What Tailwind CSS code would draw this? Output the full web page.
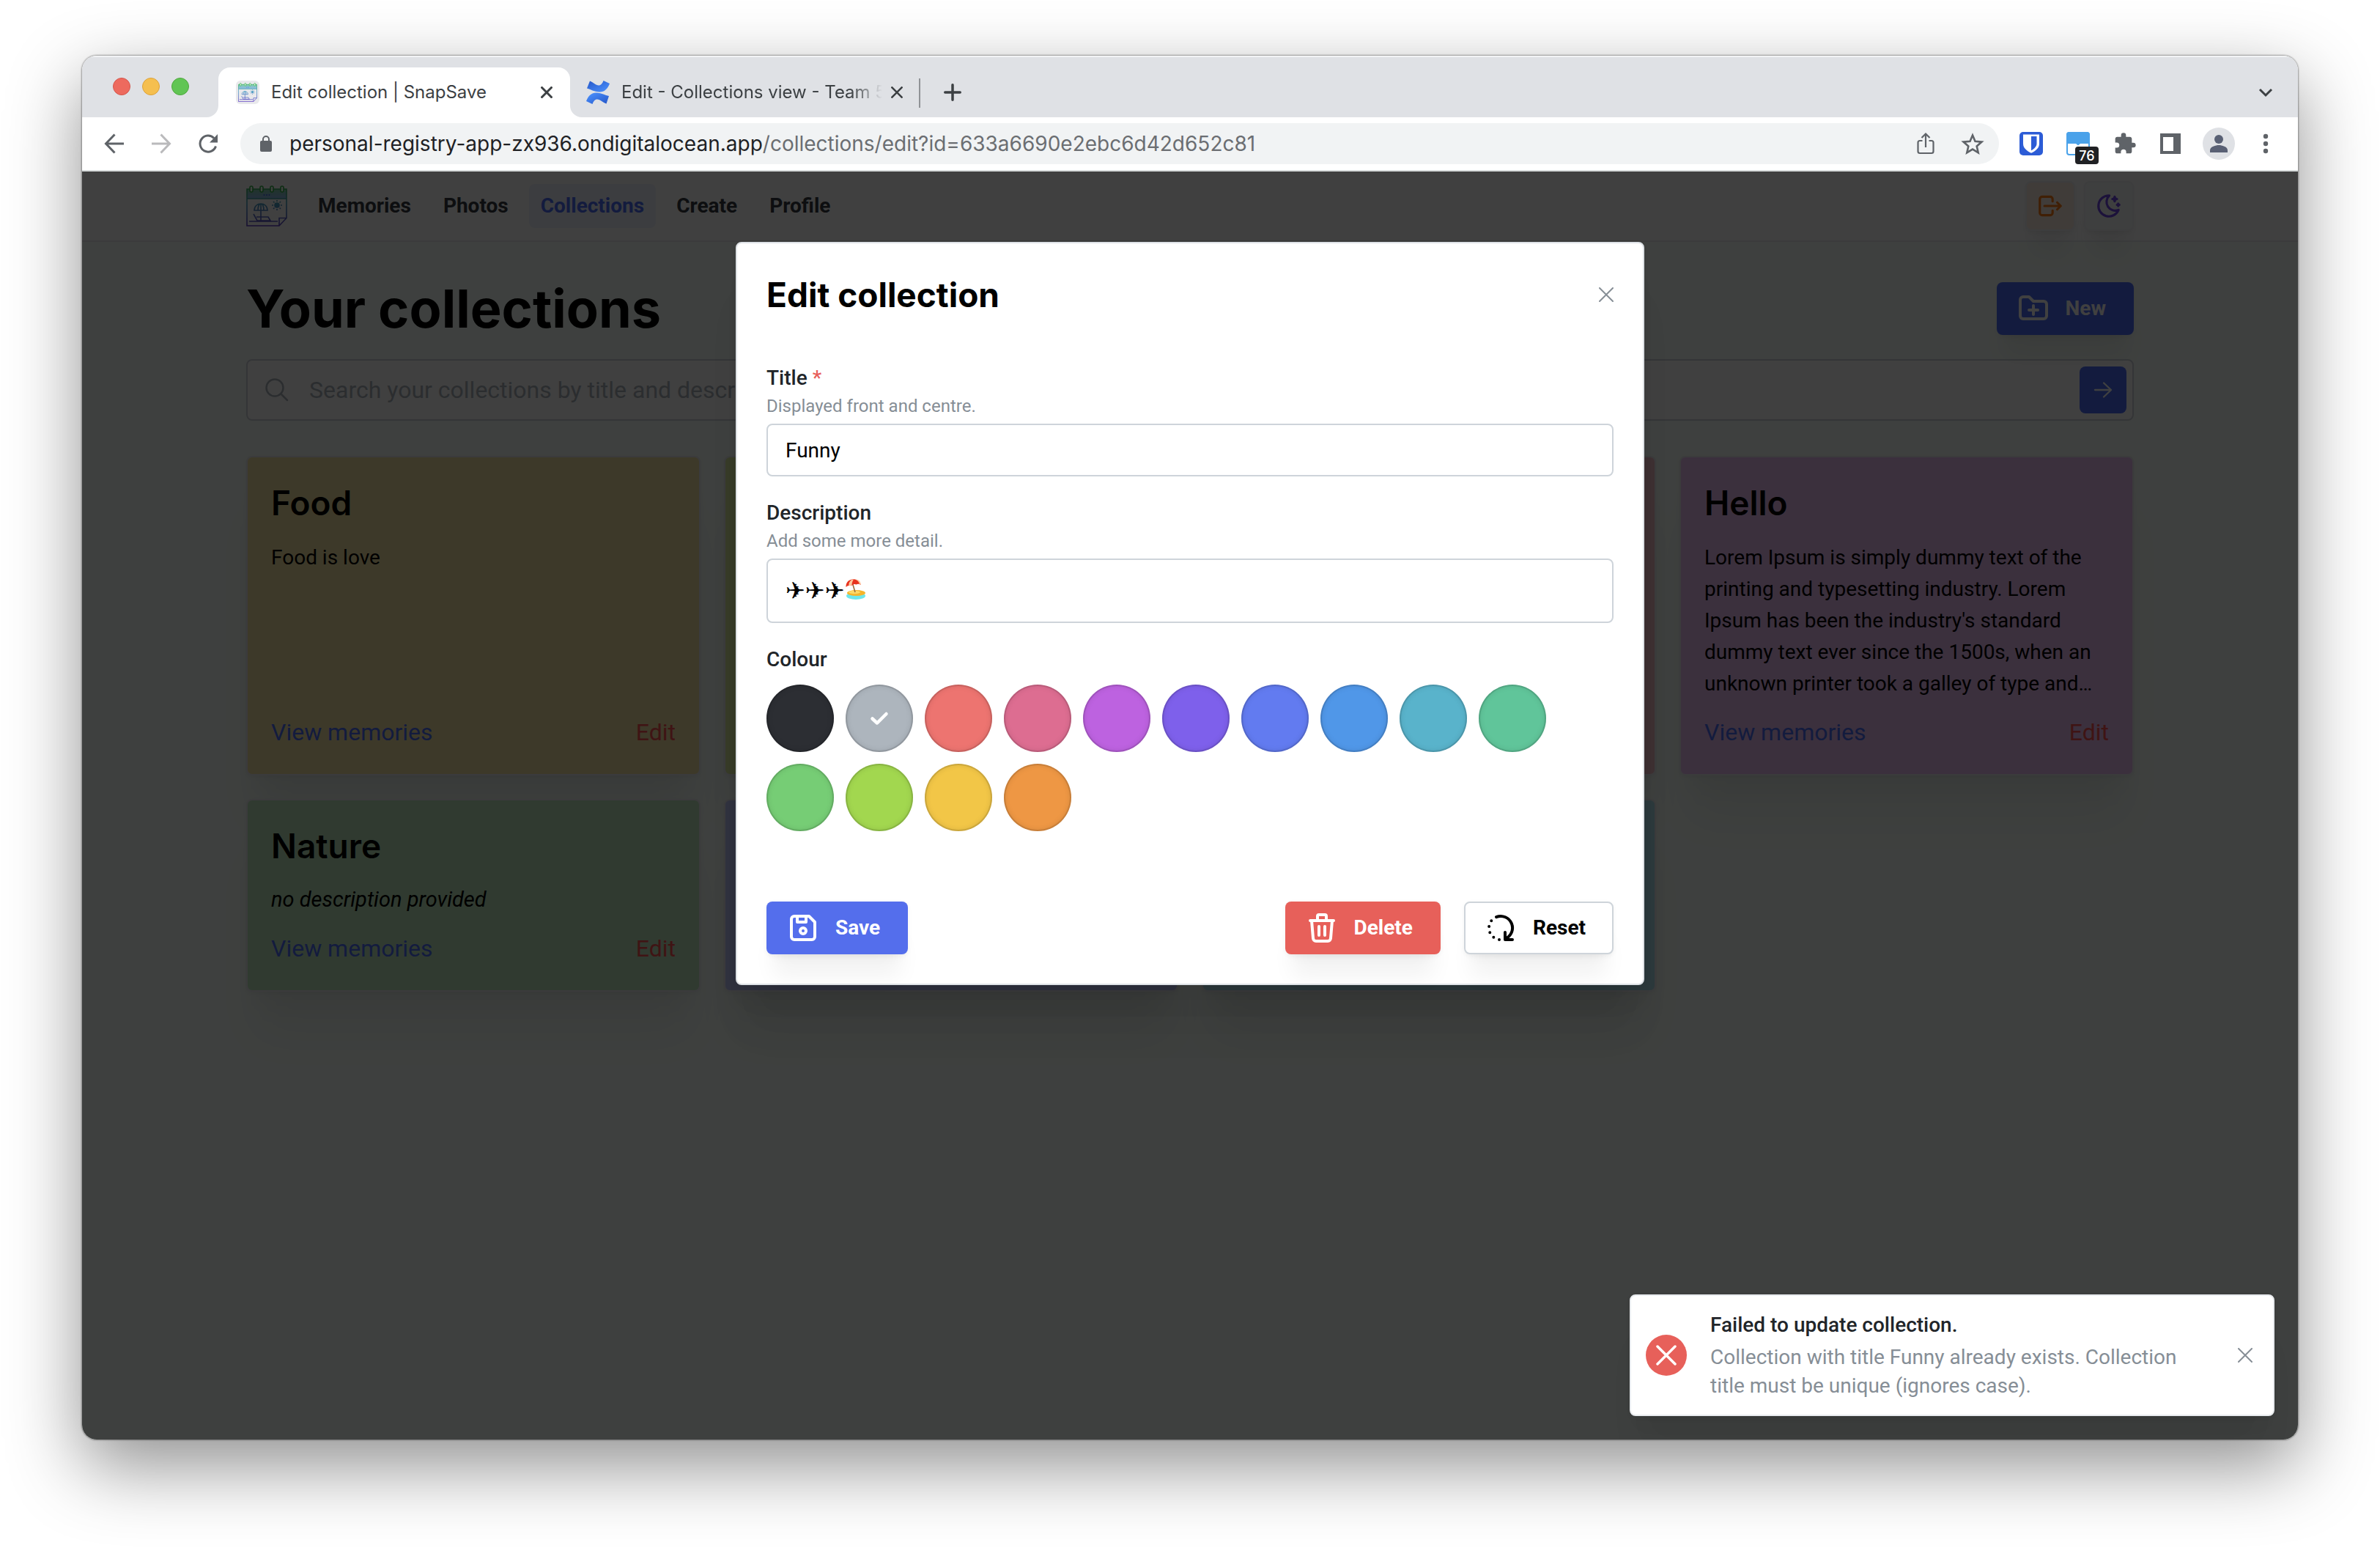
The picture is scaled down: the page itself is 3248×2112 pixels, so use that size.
<!DOCTYPE html>
<html lang="en">
<head>
<meta charset="utf-8">
<title>Edit collection | SnapSave</title>
<script src="https://cdn.jsdelivr.net/npm/@tailwindcss/browser@4"></script>
</head>
<body class="flex min-h-screen bg-white px-28 pt-[76px] pb-[148px] font-['Roboto',sans-serif] text-[28px] text-black">

<svg class="absolute size-0" aria-hidden="true">
  <defs>
    <linearGradient id="brand" gradientUnits="userSpaceOnUse" x1="0" y1="0" x2="0" y2="56">
      <stop offset="0" stop-color="#37b24d"/><stop offset=".45" stop-color="#4a9ec4"/><stop offset="1" stop-color="#5f3dc4"/>
    </linearGradient>
    <linearGradient id="band" gradientUnits="userSpaceOnUse" x1="0" y1="4" x2="0" y2="18">
      <stop offset="0" stop-color="#7fd0a4"/><stop offset="1" stop-color="#8fb6ec"/>
    </linearGradient>
  </defs>
  <symbol id="logo" viewBox="0 0 56 56">
    <path d="M1 5h54v13H1z" fill="url(#band)"/>
    <g fill="none" stroke="url(#brand)" stroke-width="1.6">
      <path d="M1 5h54v39.500L45 55H1zM1 18h54M45 55V44.500h10"/>
      <path d="M4 49h39M10 39l5 9h18l-3-5H14M20 25v23M11 34c0-12 18-12 18 0zM16 34c0-6 2-9 4-9s4 3 4 9"/>
      <circle cx="42" cy="27" r="3" fill="#4a9ec4"/>
      <path d="M42 20v2M42 32v2M35 27h2M47 27h2M37 22l1.500 1.500M45.500 30.500l1.500 1.500M37 32l1.500-1.500M45.500 23.500l1.500-1.500"/>
    </g>
    <g fill="#fff" stroke="#37b24d" stroke-width="1.6">
      <rect x="5" y="1" width="4" height="8" rx="2"/><rect x="19" y="1" width="4" height="8" rx="2"/><rect x="33" y="1" width="4" height="8" rx="2"/><rect x="47" y="1" width="4" height="8" rx="2"/>
    </g>
    <g fill="#4263eb"><circle cx="24.500" cy="13" r="1"/><circle cx="28" cy="13" r="1"/><circle cx="31.500" cy="13" r="1"/></g>
  </symbol>
</svg>

<div class="flex min-w-0 flex-1 flex-col overflow-hidden rounded-[20px] bg-white shadow-[0_0_2px_1px_rgba(0,0,0,0.35),0_36px_100px_rgba(0,0,0,0.44)]">

  <!-- Tab strip -->
  <div class="flex h-[84px] shrink-0 items-end bg-[#dfe1e5] font-['Inter',sans-serif] text-[24px] text-[#3c4043] shadow-[inset_0_2px_0_rgba(255,255,255,0.6)]">
    <div class="flex gap-4 self-center pb-0 pl-[42px]">
      <span class="size-6 rounded-full border border-[#d5564c] bg-[#ed6a5e]"></span>
      <span class="size-6 rounded-full border border-[#dca23b] bg-[#f5bf4f]"></span>
      <span class="size-6 rounded-full border border-[#50a73f] bg-[#61c554]"></span>
    </div>
    <div class="ml-6 flex items-end">
      <svg class="size-4" viewBox="0 0 16 16" fill="#fff"><path d="M16 0v16H0A16 16 0 0 0 16 0z"/></svg>
      <div class="flex h-[68px] w-[480px] items-center rounded-t-[16px] bg-white pr-5 pl-6">
        <span class="rounded-[6px] bg-[#e9e9ec] p-[3px]"><svg class="size-[26px]"><use href="#logo"/></svg></span>
        <span class="ml-4 flex-1 whitespace-nowrap">Edit collection | SnapSave</span>
        <button type="button" aria-label="Close tab" class="p-1"><svg class="size-4" viewBox="0 0 16 16" stroke="#3c4043" stroke-width="3"><path d="M0.500 0.500l15 15M15.500 0.500l-15 15"/></svg></button>
      </div>
      <svg class="size-4" viewBox="0 0 16 16" fill="#fff"><path d="M0 0v16h16A16 16 0 0 1 0 0z"/></svg>
    </div>
    <div class="flex h-[68px] w-[460px] items-center pr-[18px] pl-[6px]">
      <svg class="size-8" viewBox="0 0 32 32">
        <defs><linearGradient id="cf1" x1="1" y1="1" x2="0" y2="0"><stop offset=".2" stop-color="#4688f5"/><stop offset="1" stop-color="#2456c8"/></linearGradient><linearGradient id="cf2" x1="0" y1="0" x2="1" y2="1"><stop offset=".2" stop-color="#4688f5"/><stop offset="1" stop-color="#2456c8"/></linearGradient></defs>
        <path fill="url(#cf1)" d="M5 0.500C9 2 13 6.500 17 6.500c3 0 5-2.500 6.500-6.500L32 4c-3 8-8 12-14.500 11.500C11 15 6 12 1 10.500z"/>
        <path fill="url(#cf2)" d="M27.500 31.500C23 30 19 25.500 15 25.500c-3 0-5 2.500-6.500 6.500L0 28c3-8 8-12 14.500-11.500C21 17 26 20 31 21z"/>
      </svg>
      <span class="ml-4 min-w-0 flex-1 overflow-hidden whitespace-nowrap mask-r-from-88% mask-r-to-100%">Edit - Collections view - Team 5</span>
      <button type="button" aria-label="Close tab" class="ml-2 p-1"><svg class="size-4" viewBox="0 0 16 16" stroke="#3c4043" stroke-width="2.500"><path d="M0.500 0.500l15 15M15.500 0.500l-15 15"/></svg></button>
    </div>
    <span class="mb-[13px] h-10 w-[2px] bg-[#8f9296]"></span>
    <button type="button" aria-label="New tab" class="mb-[22px] ml-8"><svg class="size-6" viewBox="0 0 24 24" stroke="#3c4043" stroke-width="3.500" stroke-linecap="round"><path d="M12 1.750v20.500M1.750 12h20.500"/></svg></button>
    <button type="button" aria-label="Search tabs" class="mr-[34px] mb-[24px] ml-auto"><svg class="size-5" viewBox="0 0 20 20" fill="none" stroke="#3c4043" stroke-width="3"><path d="M2 6l8 8 8-8"/></svg></button>
  </div>

  <!-- Toolbar -->
  <div class="flex h-[74px] shrink-0 items-center border-b-2 border-[#d7dbdb] bg-white pr-10 pl-[30px] font-['Inter',sans-serif]">
    <button type="button" aria-label="Back"><svg class="size-7" viewBox="0 0 28 28" fill="none" stroke="#5f6368" stroke-width="3"><path d="M27 14H3M14.500 1.500L2.500 14l12 12.500"/></svg></button>
    <button type="button" aria-label="Forward" class="ml-9"><svg class="size-7" viewBox="0 0 28 28" fill="none" stroke="#bababc" stroke-width="3"><path d="M1 14h24M13.500 1.500l12 12.500-12 12.500"/></svg></button>
    <button type="button" aria-label="Reload" class="ml-9"><svg class="size-7" viewBox="0 0 28 28"><path d="M24.500 17.500A11 11 0 1 1 22 6.500" fill="none" stroke="#5f6368" stroke-width="3"/><path d="M27 1v11.500H16z" fill="#5f6368"/></svg></button>
    <div class="ml-[30px] flex h-14 flex-1 items-center rounded-full bg-[#f1f3f4] pr-5 pl-[27px]">
      <svg class="h-[22px] w-4" viewBox="0 0 16 22"><rect y="7" width="16" height="15" rx="2" fill="#5f6368"/><path d="M4 8V5a4 4 0 0 1 8 0v3" fill="none" stroke="#5f6368" stroke-width="2"/></svg>
      <span class="ml-6 flex-1 whitespace-nowrap text-[28px] text-[#202124]">personal-registry-app-zx936.ondigitalocean.app<span class="text-[#6b6e72]">/collections/edit?id=633a6690e2ebc6d42d652c81</span></span>
      <button type="button" aria-label="Share"><svg class="size-8" viewBox="0 0 32 32" fill="none" stroke="#5f6368" stroke-width="2.200"><path d="M11.500 12H8a2.500 2.500 0 0 0-2.500 2.500v12A2.500 2.500 0 0 0 8 29h16a2.500 2.500 0 0 0 2.500-2.500v-12A2.500 2.500 0 0 0 24 12h-3.500M16 21V3M10.500 8L16 2.500 21.500 8"/></svg></button>
      <button type="button" aria-label="Bookmark" class="ml-8"><svg class="size-8" viewBox="0 0 32 32" fill="none" stroke="#5f6368" stroke-width="2.600"><path d="M16 4.500l3.500 8.300 9 .8-6.800 5.900 2 8.800L16 23.600l-7.700 4.700 2-8.800-6.800-5.900 9-.8z"/></svg></button>
    </div>
    <div class="ml-7 flex items-center">
      <svg class="size-8" viewBox="0 0 32 32"><rect width="32" height="32" rx="5" fill="#2c5cd6"/><path d="M5 3.500h22V16c0 6-5 10-11 12.800C10 26 5 22 5 16z" fill="#fff"/><path d="M16 6h7.500v10c0 4-3.500 7-7.500 9.300z" fill="#2c5cd6"/></svg>
      <span class="relative ml-8 block">
        <svg class="size-8" viewBox="0 0 32 32"><rect x="1" y="1" width="30" height="30" rx="3" fill="#fff" stroke="#4aa2ea" stroke-width="2"/><path d="M0 4a4 4 0 0 1 4-4h24a4 4 0 0 1 4 4v12H19l-3 2.500L13 16H0z" fill="#4aa2ea"/></svg>
        <span class="absolute top-5 left-3 flex h-6 w-8 items-center justify-center rounded-[4px] bg-[#202124] text-[18px] font-medium text-white">76</span>
      </span>
      <svg class="ml-8 size-8" viewBox="0 0 24 24" fill="#5f6368"><path d="M20.500 11H19V7c0-1.100-.9-2-2-2h-4V3.500a2.500 2.500 0 0 0-5 0V5H4c-1.100 0-2 .9-2 2v3.800h1.500a2.700 2.700 0 0 1 0 5.400H2V20c0 1.100.9 2 2 2h3.800v-1.500a2.700 2.700 0 0 1 5.400 0V22H17c1.100 0 2-.9 2-2v-4h1.500a2.500 2.500 0 0 0 0-5z"/></svg>
      <svg class="ml-8 size-7" viewBox="0 0 28 28"><path fill="#5f6368" fill-rule="evenodd" d="M0 0h28v28H0zM4 5h14v19H4z"/></svg>
      <svg class="ml-[30px] size-11" viewBox="0 0 44 44"><circle cx="22" cy="22" r="22" fill="#dfe1e5"/><circle cx="22" cy="16" r="6" fill="#596074"/><path d="M10 34v-3c0-5 8-7 12-7s12 2 12 7v3z" fill="#596074"/></svg>
      <button type="button" aria-label="Menu" class="ml-[38px]"><svg class="h-7 w-2" viewBox="0 0 8 28" fill="#5f6368"><circle cx="4" cy="4" r="3.200"/><circle cx="4" cy="14" r="3.200"/><circle cx="4" cy="24" r="3.200"/></svg></button>
    </div>
  </div>

  <!-- Page -->
  <div class="relative flex-1 bg-[#f7fff9]">
    <header class="flex h-24 items-center border-b-2 border-[#e9ecef] bg-white px-[224px]">
      <svg class="size-14"><use href="#logo"/></svg>
      <nav class="ml-[26px] flex gap-3 font-bold text-[#343a40]">
        <a href="#" class="rounded-lg px-4 leading-[60px]">Memories</a>
        <a href="#" class="rounded-lg px-4 leading-[60px]">Photos</a>
        <a href="#" class="rounded-lg bg-[#edf2ff] px-4 leading-[60px] text-[#4c6ef5]">Collections</a>
        <a href="#" class="rounded-lg px-4 leading-[60px]">Create</a>
        <a href="#" class="rounded-lg px-4 leading-[60px]">Profile</a>
      </nav>
      <div class="ml-auto flex gap-3">
        <button type="button" aria-label="Log out" class="flex size-[68px] items-center justify-center rounded-lg border-2 border-[#f1f3f5] bg-[#fff0e4] shadow-[0_2px_6px_rgba(0,0,0,0.05),0_40px_30px_-10px_rgba(0,0,0,0.05),0_14px_14px_-10px_rgba(0,0,0,0.04)]">
          <svg class="size-[38px]" viewBox="0 0 24 24" fill="none" stroke="#fd7e14" stroke-width="2" stroke-linecap="round" stroke-linejoin="round"><path d="M14 8V6a2 2 0 0 0-2-2H5a2 2 0 0 0-2 2v12a2 2 0 0 0 2 2h7a2 2 0 0 0 2-2v-2M7 12h14l-3-3m0 6l3-3"/></svg>
        </button>
        <button type="button" aria-label="Dark mode" class="flex size-[68px] items-center justify-center rounded-lg border-2 border-[#f1f3f5] bg-[#f8fcf9] shadow-[0_2px_6px_rgba(0,0,0,0.05),0_40px_30px_-10px_rgba(0,0,0,0.05),0_14px_14px_-10px_rgba(0,0,0,0.04)]">
          <svg class="size-[38px]" viewBox="0 0 24 24" fill="none" stroke="#7048e8" stroke-width="2" stroke-linecap="round" stroke-linejoin="round"><path d="M12 3h.393a7.500 7.500 0 0 0 7.920 12.446A9 9 0 1 1 12 2.992zM17 4a2 2 0 0 0 2 2 2 2 0 0 0-2 2 2 2 0 0 0-2-2 2 2 0 0 0 2-2M19 11h2m-1-1v2"/></svg>
        </button>
      </div>
    </header>

    <main class="px-[224px] pt-9">
      <div class="flex h-[110px] items-center justify-between">
        <h1 class="font-['Inter',sans-serif] text-[72px] leading-[110px] font-bold">Your collections</h1>
        <button type="button" class="flex h-[72px] items-center rounded-lg bg-[#4c6ef5] pr-[38px] pl-[26px] font-bold text-white shadow-[0_2px_6px_rgba(0,0,0,0.05),0_40px_30px_-10px_rgba(0,0,0,0.05),0_14px_14px_-10px_rgba(0,0,0,0.04)]">
          <svg class="mr-5 size-12" viewBox="0 0 24 24" fill="none" stroke="currentColor" stroke-width="2" stroke-linecap="round" stroke-linejoin="round"><path d="M5 4h4l3 3h7a2 2 0 0 1 2 2v8a2 2 0 0 1-2 2H5a2 2 0 0 1-2-2V6a2 2 0 0 1 2-2M12 10v6M9 13h6"/></svg>New
        </button>
      </div>

      <div class="mt-[14px] flex h-[84px] items-center rounded-lg border-2 border-[#ced4da] bg-white pr-2 pl-[22px]">
        <svg class="size-9" viewBox="0 0 36 36" fill="none" stroke="#adb5bd" stroke-width="2.500" stroke-linecap="round"><circle cx="15" cy="15" r="11.500"/><path d="M23.500 23.500L32 32"/></svg>
        <input type="search" aria-label="Search collections" placeholder="Search your collections by title and description" class="ml-[26px] h-full min-w-0 flex-1 text-[32px] outline-none placeholder:text-[#adb5bd]">
        <button type="button" aria-label="Search" class="flex size-16 items-center justify-center rounded-lg bg-[#4c6ef5]">
          <svg class="size-9" viewBox="0 0 36 36" fill="none" stroke="#fff" stroke-width="2.300" stroke-linecap="round" stroke-linejoin="round"><path d="M7 18h22M19 8.500l10 9.500-10 9.500"/></svg>
        </button>
      </div>

      <div class="mt-12 grid grid-cols-4 gap-8">
        <article class="flex flex-col rounded-lg border-2 border-[#e9ecef] bg-[#f4e4a2] p-8 shadow-[0_2px_6px_rgba(0,0,0,0.05),0_72px_56px_-14px_rgba(0,0,0,0.05),0_34px_34px_-14px_rgba(0,0,0,0.04)]">
          <h2 class="font-['Inter',sans-serif] text-[46px] leading-[60px] font-semibold">Food</h2>
          <p class="mt-[23px] leading-[43px]">Food is love</p>
          <div class="mt-auto flex justify-between pt-5 text-[32px] leading-[50px]"><a href="#" class="text-[#4c6ef5]">View memories</a><a href="#" class="text-[#fa5252]">Edit</a></div>
        </article>
        <article class="rounded-lg border-2 border-[#e9ecef] bg-[#dceca0] shadow-[0_2px_6px_rgba(0,0,0,0.05),0_72px_56px_-14px_rgba(0,0,0,0.05),0_34px_34px_-14px_rgba(0,0,0,0.04)]"></article>
        <article class="rounded-lg border-2 border-[#e9ecef] bg-[#f4c0c6] shadow-[0_2px_6px_rgba(0,0,0,0.05),0_72px_56px_-14px_rgba(0,0,0,0.05),0_34px_34px_-14px_rgba(0,0,0,0.04)]"></article>
        <article class="flex flex-col rounded-lg border-2 border-[#e9ecef] bg-[#ebbff4] p-8 shadow-[0_2px_6px_rgba(0,0,0,0.05),0_72px_56px_-14px_rgba(0,0,0,0.05),0_34px_34px_-14px_rgba(0,0,0,0.04)]">
          <h2 class="font-['Inter',sans-serif] text-[46px] leading-[60px] font-semibold">Hello</h2>
          <p class="mt-[23px] line-clamp-5 leading-[43px]">Lorem Ipsum is simply dummy text of the printing and typesetting industry. Lorem Ipsum has been the industry's standard dummy text ever since the 1500s, when an unknown printer took a galley of type and scrambled it to make a type specimen book.</p>
          <div class="mt-auto flex justify-between pt-5 text-[32px] leading-[50px]"><a href="#" class="text-[#4c6ef5]">View memories</a><a href="#" class="text-[#fa5252]">Edit</a></div>
        </article>
        <article class="flex flex-col rounded-lg border-2 border-[#e9ecef] bg-[#bfe8bf] p-8 shadow-[0_2px_6px_rgba(0,0,0,0.05),0_72px_56px_-14px_rgba(0,0,0,0.05),0_34px_34px_-14px_rgba(0,0,0,0.04)]">
          <h2 class="font-['Inter',sans-serif] text-[46px] leading-[60px] font-semibold">Nature</h2>
          <p class="mt-[22px] leading-[43px] text-[29px] italic">no description provided</p>
          <div class="mt-auto flex justify-between pt-5 text-[32px] leading-[50px]"><a href="#" class="text-[#4c6ef5]">View memories</a><a href="#" class="text-[#fa5252]">Edit</a></div>
        </article>
        <article class="rounded-lg border-2 border-[#e9ecef] bg-[#bfc8fa] shadow-[0_2px_6px_rgba(0,0,0,0.05),0_72px_56px_-14px_rgba(0,0,0,0.05),0_34px_34px_-14px_rgba(0,0,0,0.04)]"></article>
        <article class="rounded-lg border-2 border-[#e9ecef] bg-[#aee4ee] shadow-[0_2px_6px_rgba(0,0,0,0.05),0_72px_56px_-14px_rgba(0,0,0,0.05),0_34px_34px_-14px_rgba(0,0,0,0.04)]"></article>
      </div>
    </main>

    <div class="absolute inset-0 bg-black/75"></div>

    <!-- Edit dialog -->
    <form role="dialog" aria-labelledby="dialog-title" class="absolute top-24 left-1/2 w-[1240px] -translate-x-1/2 rounded-lg border-2 border-[#dee2e6] bg-white p-10 shadow-[0_2px_6px_rgba(0,0,0,0.05),0_72px_56px_-14px_rgba(0,0,0,0.05),0_34px_34px_-14px_rgba(0,0,0,0.04)]">
      <div class="flex items-center justify-between">
        <h2 id="dialog-title" class="font-['Inter',sans-serif] text-[46px] leading-[60px] font-bold">Edit collection</h2>
        <button type="button" aria-label="Close"><svg class="size-5" viewBox="0 0 20 20" stroke="#868e96" stroke-width="2" stroke-linecap="round"><path d="M1 1l18 18M19 1L1 19"/></svg></button>
      </div>

      <label for="title" class="mt-[62px] block leading-[44px] font-medium text-[#212529]">Title <span class="text-[#e7605a]">*</span></label>
      <p class="text-[24px] leading-[32px] text-[#868e96]">Displayed front and centre.</p>
      <input id="title" type="text" value="Funny" class="mt-2 block h-[72px] w-full rounded-lg border-2 border-[#ced4da] px-6 outline-none">

      <label for="description" class="mt-7 block leading-[44px] font-medium text-[#212529]">Description</label>
      <p class="text-[24px] leading-[32px] text-[#868e96]">Add some more detail.</p>
      <div class="relative mt-2">
        <textarea id="description" rows="1" class="block h-[88px] w-full resize-none rounded-lg border-2 border-[#ced4da] px-6 py-5 font-['DejaVu_Sans',sans-serif] text-[32px] leading-[44px] font-bold outline-none">✈✈✈</textarea>
        <svg class="absolute top-7 left-[108px] size-7" viewBox="0 0 28 28">
          <ellipse cx="14" cy="23" rx="13" ry="5" fill="#6fe6ec"/><ellipse cx="14.500" cy="19" rx="12.500" ry="4" fill="#f6b52c"/><ellipse cx="12" cy="18" rx="8" ry="2.200" fill="#fcd968"/>
          <path d="M9.500 6l3.500 12" stroke="#9c6a3a" stroke-width="1.600"/>
          <path d="M.5 11C0 3 7-1 13 .5S21 6 20.500 8c-2-1.500-4-1.500-6-.5-2-1-4-.8-6 1.500C5 8.500 2.500 9 .5 11z" fill="#e8331f"/><path d="M8 1c-3 3-4 5-3.500 8.200 1.500-.6 2.500-.7 4-.2C8.500 6 9 3 11 .4zM13 .5c3 1 5 2.500 6 6.500l1.500 1c.5-4-2-7.500-7.500-7.500z" fill="#ffc9a0"/>
        </svg>
      </div>

      <fieldset class="mt-7">
        <legend class="leading-[44px] font-medium text-[#212529]">Colour</legend>
        <div class="mt-3 flex flex-wrap gap-4">
          <input type="radio" name="colour" aria-label="Dark" class="size-[92px] appearance-none rounded-full bg-[#2c2e33] shadow-[inset_0_0_0_2px_rgba(0,0,0,0.1),inset_0_0_8px_rgba(0,0,0,0.15)]">
          <label class="relative block size-[92px]"><input type="radio" name="colour" checked aria-label="Grey" class="block size-[92px] appearance-none rounded-full bg-[#adb5bd] shadow-[inset_0_0_0_2px_rgba(0,0,0,0.1),inset_0_0_8px_rgba(0,0,0,0.15)]"><svg class="absolute inset-0 m-auto size-7" viewBox="0 0 28 28" fill="none" stroke="#fff" stroke-width="4.500" stroke-linecap="round" stroke-linejoin="round"><path d="M4.500 14.500l6.500 6L23.500 8"/></svg></label>
          <input type="radio" name="colour" aria-label="Red" class="size-[92px] appearance-none rounded-full bg-[#ed7470] shadow-[inset_0_0_0_2px_rgba(0,0,0,0.1),inset_0_0_8px_rgba(0,0,0,0.15)]">
          <input type="radio" name="colour" aria-label="Pink" class="size-[92px] appearance-none rounded-full bg-[#dd6d91] shadow-[inset_0_0_0_2px_rgba(0,0,0,0.1),inset_0_0_8px_rgba(0,0,0,0.15)]">
          <input type="radio" name="colour" aria-label="Grape" class="size-[92px] appearance-none rounded-full bg-[#bd62e0] shadow-[inset_0_0_0_2px_rgba(0,0,0,0.1),inset_0_0_8px_rgba(0,0,0,0.15)]">
          <input type="radio" name="colour" aria-label="Violet" class="size-[92px] appearance-none rounded-full bg-[#7e60eb] shadow-[inset_0_0_0_2px_rgba(0,0,0,0.1),inset_0_0_8px_rgba(0,0,0,0.15)]">
          <input type="radio" name="colour" aria-label="Indigo" class="size-[92px] appearance-none rounded-full bg-[#627bf0] shadow-[inset_0_0_0_2px_rgba(0,0,0,0.1),inset_0_0_8px_rgba(0,0,0,0.15)]">
          <input type="radio" name="colour" aria-label="Blue" class="size-[92px] appearance-none rounded-full bg-[#5097e8] shadow-[inset_0_0_0_2px_rgba(0,0,0,0.1),inset_0_0_8px_rgba(0,0,0,0.15)]">
          <input type="radio" name="colour" aria-label="Cyan" class="size-[92px] appearance-none rounded-full bg-[#59b3cb] shadow-[inset_0_0_0_2px_rgba(0,0,0,0.1),inset_0_0_8px_rgba(0,0,0,0.15)]">
          <input type="radio" name="colour" aria-label="Teal" class="size-[92px] appearance-none rounded-full bg-[#60c59a] shadow-[inset_0_0_0_2px_rgba(0,0,0,0.1),inset_0_0_8px_rgba(0,0,0,0.15)]">
          <input type="radio" name="colour" aria-label="Green" class="size-[92px] appearance-none rounded-full bg-[#76cd75] shadow-[inset_0_0_0_2px_rgba(0,0,0,0.1),inset_0_0_8px_rgba(0,0,0,0.15)]">
          <input type="radio" name="colour" aria-label="Lime" class="size-[92px] appearance-none rounded-full bg-[#a2d74f] shadow-[inset_0_0_0_2px_rgba(0,0,0,0.1),inset_0_0_8px_rgba(0,0,0,0.15)]">
          <input type="radio" name="colour" aria-label="Yellow" class="size-[92px] appearance-none rounded-full bg-[#f2c647] shadow-[inset_0_0_0_2px_rgba(0,0,0,0.1),inset_0_0_8px_rgba(0,0,0,0.15)]">
          <input type="radio" name="colour" aria-label="Orange" class="size-[92px] appearance-none rounded-full bg-[#ee9744] shadow-[inset_0_0_0_2px_rgba(0,0,0,0.1),inset_0_0_8px_rgba(0,0,0,0.15)]">
        </div>
      </fieldset>

      <div class="mt-24 flex gap-8 font-bold">
        <button type="submit" class="mr-auto flex h-[72px] items-center rounded-lg bg-[#546eec] pr-[38px] pl-[26px] text-white shadow-[0_2px_6px_rgba(0,0,0,0.05),0_40px_30px_-10px_rgba(0,0,0,0.05),0_14px_14px_-10px_rgba(0,0,0,0.04)]">
          <svg class="mr-5 size-12" viewBox="0 0 24 24" fill="none" stroke="currentColor" stroke-width="2" stroke-linecap="round" stroke-linejoin="round"><path d="M6 4h10l4 4v10a2 2 0 0 1-2 2H6a2 2 0 0 1-2-2V6a2 2 0 0 1 2-2M14 4v4H8V4"/><circle cx="12" cy="14" r="2"/></svg>Save
        </button>
        <button type="button" class="flex h-[72px] items-center rounded-lg bg-[#e7605a] pr-[38px] pl-[26px] text-white shadow-[0_2px_6px_rgba(0,0,0,0.05),0_40px_30px_-10px_rgba(0,0,0,0.05),0_14px_14px_-10px_rgba(0,0,0,0.04)]">
          <svg class="mr-5 size-12" viewBox="0 0 24 24" fill="none" stroke="currentColor" stroke-width="2" stroke-linecap="round" stroke-linejoin="round"><path d="M4 7h16M10 11v6M14 11v6M5 7l1 12a2 2 0 0 0 2 2h8a2 2 0 0 0 2-2l1-12M9 7V4a1 1 0 0 1 1-1h4a1 1 0 0 1 1 1v3"/></svg>Delete
        </button>
        <button type="reset" class="flex h-[72px] items-center rounded-lg border-2 border-[#ced4da] bg-white pr-9 pl-6 shadow-[0_2px_6px_rgba(0,0,0,0.05),0_40px_30px_-10px_rgba(0,0,0,0.05),0_14px_14px_-10px_rgba(0,0,0,0.04)]">
          <svg class="mr-5 size-12" viewBox="0 0 24 24" fill="none" stroke="currentColor" stroke-width="2" stroke-linecap="round" stroke-linejoin="round"><path d="M9 4.550a8 8 0 0 1 6 14.900M15 15v5h5M5.630 7.160v.01M4.060 11v.01M4.630 15.100v.01M7.160 18.370v.01M11 19.940v.01"/></svg>Reset
        </button>
      </div>
    </form>

    <!-- Notification -->
    <div role="alert" class="absolute right-8 bottom-8 flex w-[880px] items-center rounded-lg border-2 border-[#e9ecef] bg-white py-5 pr-7 pl-5 shadow-[0_2px_6px_rgba(0,0,0,0.05),0_56px_46px_-14px_rgba(0,0,0,0.05),0_24px_24px_-14px_rgba(0,0,0,0.04)]">
      <span class="flex size-14 shrink-0 items-center justify-center rounded-full bg-[#e7605a]"><svg class="size-7" viewBox="0 0 28 28" stroke="#fff" stroke-width="3.500" stroke-linecap="round"><path d="M2 2l24 24M26 2L2 26"/></svg></span>
      <div class="ml-8 flex-1">
        <p class="leading-[40px] font-medium text-[#212529]">Failed to update collection.</p>
        <p class="mt-1 leading-[39px] text-[#868e96]">Collection with title Funny already exists. Collection title must be unique (ignores case).</p>
      </div>
      <button type="button" aria-label="Dismiss" class="ml-20"><svg class="size-5" viewBox="0 0 20 20" stroke="#868e96" stroke-width="2" stroke-linecap="round"><path d="M1 1l18 18M19 1L1 19"/></svg></button>
    </div>
  </div>
</div>
</body>
</html>
